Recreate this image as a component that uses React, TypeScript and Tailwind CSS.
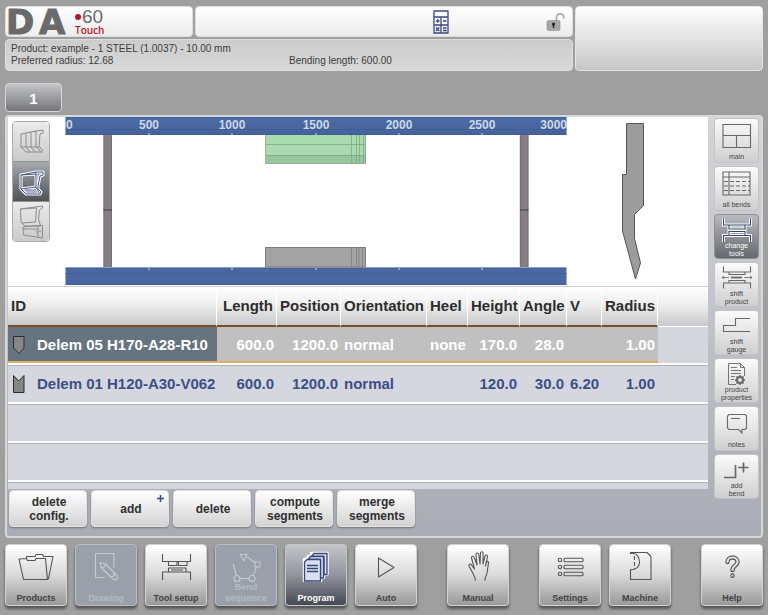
import type { ReactNode } from 'react'
import clsx from 'clsx'

const RULER = [
  { x: 149, label: '500' },
  { x: 232, label: '1000' },
  { x: 316, label: '1500' },
  { x: 399, label: '2000' },
  { x: 482, label: '2500' },
]

const COLUMNS = [
  { name: 'ID', width: 'w-[209px]', align: 'text-left' },
  { name: 'Length', width: 'w-[60px]', align: 'text-right' },
  { name: 'Position', width: 'w-[64px]', align: 'text-right' },
  { name: 'Orientation', width: 'w-[86px]', align: 'text-left' },
  { name: 'Heel', width: 'w-[41px]', align: 'text-left' },
  { name: 'Height', width: 'w-[52px]', align: 'text-right' },
  { name: 'Angle', width: 'w-[47px]', align: 'text-right' },
  { name: 'V', width: 'w-[35px]', align: 'text-left' },
  { name: 'Radius', width: 'w-[56px]', align: 'text-right' },
]

const TOOLS = [
  { kind: 'punch', cells: ['Delem 05 H170-A28-R10', '600.0', '1200.0', 'normal', 'none', '170.0', '28.0', '', '1.00'] },
  { kind: 'die', cells: ['Delem 01 H120-A30-V062', '600.0', '1200.0', 'normal', '', '120.0', '30.0', '6.20', '1.00'] },
]

function Logo() {
  return (
    <svg width="104" height="29" viewBox="0 0 104 29" role="img" aria-label="DA-60 Touch" className="overflow-visible">
      <g fill="#6a6a6a" stroke="#6a6a6a" fontFamily="'DejaVu Sans', sans-serif" fontWeight="700" fontSize="34">
        <text x="-2" y="27">D</text>
        <text x="31" y="27">A</text>
      </g>
      <circle cx="70" cy="10" r="3" fill="#b5182d" />
      <text x="74" y="16" fontFamily="Liberation Sans" fontSize="19" fill="#6a6a6a">60</text>
      <text x="67" y="27" fontFamily="Open Sans" fontSize="10" fontWeight="600" fill="#b5182d">Touch</text>
    </svg>
  )
}

function CalculatorIcon() {
  return (
    <svg width="16" height="24" viewBox="0 0 16 24" fill="none" stroke="#3b4a80" strokeWidth="1.3">
      <path d="M1 1h14v22H1zM1 7h14M1 15h14M8 7v16" />
      <path d="M3 11h3.500M4.700 9.300v3.500M10 11h3.500M3 17.500l3.300 3.500M6.300 17.500L3 21M10 18h3.500M10 20.500h3.500" />
    </svg>
  )
}

function UnlockedIcon() {
  return (
    <svg width="20" height="20" viewBox="0 0 20 20">
      <path d="M10.500 9V5.500a3.500 3.500 0 0 1 7.300 0v1" fill="none" stroke="#a8a8a8" strokeWidth="1.600" />
      <rect x="1" y="8.500" width="13" height="10" rx="1.500" fill="#a6a6a6" stroke="#8e8e8e" strokeWidth=".6" />
      <circle cx="7.500" cy="12" r="1.600" fill="#222" />
      <path d="M7.500 12v4" stroke="#222" strokeWidth="1.400" />
    </svg>
  )
}

// Front view of the press: ruler beams, side frames, installed segments and the tool profile
function MachineView() {
  return (
    <svg viewBox="57 117 651 169" className="h-[169px] min-w-0 flex-1 bg-white">
      <defs>
        <linearGradient id="beam" x1="0" y1="0" x2="0" y2="1">
          <stop offset="0" stopColor="#4d6ca3" />
          <stop offset="1" stopColor="#45629a" />
        </linearGradient>
      </defs>
      <rect x="65.500" y="117" width="501" height="18" fill="url(#beam)" />
      <path d="M65 117.500h502M65 129.500h502M65 134.500h502" stroke="#36568f" strokeOpacity=".4" />
      <rect x="65.500" y="267.500" width="501" height="17.500" fill="#4a689f" />
      <path d="M65 268h502M65 273.500h502M65 284.500h502" stroke="#36568f" strokeOpacity=".4" />
      <g fontFamily="Liberation Sans" fontSize="12" fontWeight="700" fill="#ccd8ea">
        <text x="66" y="129">0</text>
        {RULER.map((mark) => (
          <text key={mark.label} x={mark.x} y="129" textAnchor="middle">{mark.label}</text>
        ))}
        <text x="567" y="129" textAnchor="end">3000</text>
      </g>
      {RULER.map((mark) => (
        <path key={mark.x} d={`M${mark.x} 133v2M${mark.x} 268v2`} stroke="#ccd8ea" />
      ))}
      {[103.5, 519.9].map((x) => (
        <g key={x}>
          <rect x={x} y="135" width="8.500" height="132" fill="#857f86" />
          <path d={`M${x + 0.5} 135v132M${x + 8} 135v132`} stroke="#756f76" />
          <path d={`M${x} 210h8.500`} stroke="#57525a" strokeWidth="1.500" />
        </g>
      ))}
      <rect x="266" y="135" width="100" height="20" fill="#aadbb0" />
      <rect x="266" y="155" width="100" height="8.500" fill="#98c69d" />
      <path d="M266 144.500h100M266 155.500h100M265.500 135v28.500h100V135M351.500 135v28M356.500 135v28M359.500 135v28M363.500 135v28" fill="none" stroke="#7ba883" strokeWidth=".8" />
      <rect x="265.500" y="247.500" width="100" height="19.500" fill="#a3a3a3" stroke="#7d7d7d" />
      <path d="M351.500 248v19M356.500 248v19M359 248v19M362.500 248v19" stroke="#808080" strokeWidth=".8" />
      <path
        d="M626.500 123.500H643.500V205.500L634.500 214.500V238.500L640.500 263L635.500 279L622.500 231V174.500H626.500Z"
        fill="#9c9c9c"
        stroke="#555"
      />
    </svg>
  )
}

const VIEWS = [
  {
    name: 'segments view',
    icon: (
      <path d="M9 12l5-1 5-1 5-1 7-1v3l-3 1-1 12 4 5M9 12v13l5 5h17M9 25h18M14 11v14l4 5M19 10v15l4 5M24 9v15l5 6M16 11l2-1M21 10l2-1" />
    ),
  },
  {
    name: 'tool view',
    icon: <path d="M9 13l15-3h7v3l-3 1-2 10v3l3 3-1 2H14l-5-5zM9 13l15-1v13l-15 2M24 25l3 6M13 28h11M24 10v3" />,
  },
  {
    name: 'machine view',
    icon: <path d="M8.500 7l22-3v2l-3 2-1 10 1 2 1 4H13l-4-4zM8.500 7l16-1-1 14-14 1M11 25l16-1.500h3.500V36l-19-3zM26 24v11M11 27h15M24 30h2M28 28v2" />,
  },
]

const STEPS: { name: string; lines: string[]; icon: ReactNode }[] = [
  { name: 'main', lines: ['main'], icon: <path d="M9 5.500h27.500v23H9zM9 16.500h27.500M22.500 16.500v12" /> },
  {
    name: 'all bends',
    lines: ['all bends'],
    icon: (
      <>
        <path d="M9 5h27v23H9zM9 10h27M15 5v23" />
        <path d="M10 14.500h26M10 19h26M10 23.500h26" strokeDasharray="4 2" />
      </>
    ),
  },
  {
    name: 'change tools',
    lines: ['change', 'tools'],
    icon: <path d="M9.500 3.500v6.500h27V3.500M15 10.500v3.500h16v-3.500M15 20v-3.500h16V20M9.500 27v-6.500h27V27" />,
  },
  {
    name: 'shift product',
    lines: ['shift', 'product'],
    icon: (
      <>
        <path d="M9.500 3.500v5.500h27V3.500M15 9v2.500h16V9M15 20v-2.500h16V20M9.500 25.500V20h27v5.500" />
        <path d="M17 14.500h11" strokeWidth="1.800" />
        <path d="M8 14.500h7M10 13l-2 1.500 2 1.500M30 14.500h8M36 13l2 1.500-2 1.500" strokeWidth=".8" />
      </>
    ),
  },
  { name: 'shift gauge', lines: ['shift', 'gauge'], icon: <path d="M36 7.500H21.500v7H9.500v6H36" /> },
  {
    name: 'product properties',
    lines: ['product', 'properties'],
    icon: (
      <>
        <path d="M22 25.500h-7.500v-21h12l4 4V17M26.500 4.500v4h4M17 8.500h6M17 11.500h10M17 14.500h10M17 17.500h4M17 20.500h3" strokeWidth=".9" />
        <circle cx="26" cy="21" r="3" strokeWidth="2" />
        <path d="M26 16v2M26 24v2M21 21h2M29 21h2M22.500 17.500l1.500 1.500M28 23l1.500 1.500M22.500 24.500l1.500-1.500M28 19l1.500-1.500" strokeWidth="1.500" />
      </>
    ),
  },
  {
    name: 'notes',
    lines: ['notes'],
    icon: <path d="M15 7.500h16l1.500 1.500v12L31 22.500h-3v3.500l-3.500-3.500H15L13.500 21V9zM17 11.500h9" />,
  },
  {
    name: 'add bend',
    lines: ['add', 'bend'],
    icon: <path d="M10 22.500h11.500V10M24 12.500h10.500M29.500 7.500v10" strokeWidth="1.700" />,
  },
]

const ACTIONS = [['delete', 'config.'], ['add'], ['delete'], ['compute', 'segments'], ['merge', 'segments']]

type Mode = { name: string; state?: 'active' | 'disabled'; icon: ReactNode }

const MODES: Mode[][] = [
  [
    {
      name: 'Products',
      icon: (
        <path d="M3 9l7.500-.5 1 2h7.500l1-2h9.500L31.500 29.500H7.500zM10.500 8.500v-2h8.500l1-2h6.500l1 2H37l-4.500 22-1 1" />
      ),
    },
    {
      name: 'Drawing',
      state: 'disabled',
      icon: <path d="M19 27.500H9.500V3.500h18.500v14M28 26v-4M14 12.500l1.500 5.500L27 29l3 1 1.500-1.500-.5-3L19.500 14zM15.500 18c2 0 3.500-1.500 4-4M25.500 27.500l3.500-3.500" />,
    },
    {
      name: 'Tool setup',
      icon: <path d="M6.500 4v7.500h28V4M12.500 11.500v4H21v-4M22.500 11.500v4H31v-4M12.500 22v-4H30v4M6.500 30v-8h28v8M15 20h12" />,
    },
    {
      name: 'Bend sequence',
      state: 'disabled',
      icon: (
        <>
          <path d="M7 14l3.500 11.500M14 28.500h9M27 26l3.500-9M29 12.500L21 7M14 4.500l7-.5-3 7z" />
          <circle cx="11" cy="28.500" r="3" />
          <circle cx="26" cy="28.500" r="3" />
          <path d="M29 12h5v5h-5z" />
        </>
      ),
    },
    {
      name: 'Program',
      state: 'active',
      icon: (
        <>
          <g fill="#dfe6f4" stroke="#fff" strokeWidth="3.500">
            <path d="M15.500 3.500h15.500v20.500h-15.500zM12 6.500h15.500v21H12zM8.500 9.500h16v21.500h-16z" />
          </g>
          <g fill="#d9e1f0" stroke="#35467a" strokeWidth="1.300">
            <path d="M18 3.500h13v21h-3V6.500H15.500z" />
            <path d="M14.500 6.500H27.500v21.500h-3V9.500H12z" />
            <path d="M11 9.500h13.500V31H8.500V12z" />
            <path d="M11 15.500h11M11 18.500h11M11 21.500h11" />
          </g>
        </>
      ),
    },
    { name: 'Auto', icon: <path d="M12.500 8v19L28 17.500z" /> },
  ],
  [
    {
      name: 'Manual',
      icon: (
        <path d="M17.500 30.500c0-3-2-5.500-3-8l-3.500-6.500c-.5-2 1.500-2.500 2.500-1l3 4-3-11c-.3-2 2-2.500 2.600-.6L19 15 18 4.500c0-2 2.500-2 2.800 0L22 14l.5-11c.2-1.700 2.500-1.700 2.600 0L25 14l2-8c.5-1.600 2.500-1.200 2.500.5L27.500 16l1-3.500c.5-1.500 2.500-1.500 2 .5l-1.500 10c-.5 3-2.500 4.500-2 7.500" />
      ),
    },
  ],
  [
    {
      name: 'Settings',
      icon: (
        <>
          {[10, 17, 24].map((y) => (
            <g key={y}>
              <circle cx="10" cy={y} r="1.700" />
              <rect x="14" y={y - 1.7} width="19" height="3.400" rx="1" />
            </g>
          ))}
        </>
      ),
    },
    {
      name: 'Machine',
      icon: (
        <>
          <path d="M10.500 2.500H27l4 4v23H10.500V19.500c3 1 9-1.500 9-7.500 0-5-3-8.500-5.500-8.500h-3.500z" />
          <path d="M14.500 6v13" strokeDasharray="4 2" />
        </>
      ),
    },
  ],
  [
    {
      name: 'Help',
      icon: (
        <g strokeLinecap="round">
          <path d="M15.500 12c0-6 10-6 10 0 0 3.500-5 3.500-5 8M20.500 25.500v.2" strokeWidth="4.400" />
          <path d="M15.500 12c0-6 10-6 10 0 0 3.500-5 3.500-5 8M20.500 25.500v.2" stroke="#dedede" strokeWidth="2.200" />
        </g>
      ),
    },
  ],
]

function ToolIcon({ kind }: { kind: string }) {
  return (
    <svg width="12" height="18" viewBox="0 0 12 18" fill="#868686" stroke="#2c2c2c" className="shrink-0">
      <path d={kind === 'punch' ? 'M.5.5h10.500V12L6 17.500.500 12z' : 'M.500 17.500V.500L5.700 6 11 .500V17.500z'} />
    </svg>
  )
}

function ToolTable() {
  return (
    <table className="w-full table-fixed border-separate border-spacing-0 text-[15px] leading-[18px] font-bold">
      <thead>
        <tr className="h-[40px] text-[#2d2d2d]">
          {COLUMNS.map((col) => (
            <th
              key={col.name}
              scope="col"
              className={clsx(
                col.width,
                col.align,
                'border-r border-b-2 border-r-white border-b-[#7c4c22] bg-linear-to-b from-white via-[#ececec] to-[#c8c9cb] px-[3px]',
              )}
            >
              {col.name}
            </th>
          ))}
          <td className="border-b border-white bg-linear-to-b from-white via-[#ececec] to-[#c8c9cb]" />
        </tr>
      </thead>
      <tbody>
        {TOOLS.map((tool, row) => (
          <tr key={tool.kind} className={row === 0 ? 'h-[38px]' : 'h-[39px]'}>
            {tool.cells.map((cell, i) => (
              <td
                key={COLUMNS[i].name}
                className={clsx(
                  COLUMNS[i].align,
                  'border-b-2 border-white px-[3px] whitespace-nowrap',
                  row === 0 ? 'text-white shadow-[inset_0_-2px_0_#e0ae68]' : 'border-t border-t-[#adb2bb] bg-[#d5d7de] text-[#3b4f88]',
                  row === 0 && (i === 0 ? 'bg-[#66747f]' : 'bg-[#c0c0c0]'),
                )}
              >
                {i === 0 ? (
                  <span className="flex items-center gap-3 pl-[2px]">
                    <ToolIcon kind={tool.kind} />
                    {cell}
                  </span>
                ) : (
                  cell
                )}
              </td>
            ))}
            <td className={clsx('border-b-2 border-white bg-[#d4d7dd]', row === 1 && 'border-t border-t-[#adb2bb]')} />
          </tr>
        ))}
        {[0, 1].map((row) => (
          <tr key={row} className="h-[39px]">
            <td colSpan={10} className="border-t border-b-2 border-t-[#adb2bb] border-b-white bg-[#d5d7dd]" />
          </tr>
        ))}
        <tr className="h-[7px]">
          <td colSpan={10} className="border-t border-[#adb2bb] bg-[#d3d6dc] p-0" />
        </tr>
      </tbody>
    </table>
  )
}

function ModeButton({ mode }: { mode: Mode }) {
  const disabled = mode.state === 'disabled'
  const active = mode.state === 'active'
  return (
    <button
      type="button"
      disabled={disabled}
      className={clsx(
        'flex h-[62px] w-[62px] flex-col items-center justify-between rounded border pt-[5px] pb-px text-[9px] leading-[11px] font-bold shadow-[0_3px_3px_#555]',
        disabled && 'border-[#b9bdc6] bg-[#9aa0ab] text-[#b6bac4]',
        active && 'border-[#c6c8cd] bg-linear-to-b from-[#c3c5ca] via-[#92959d] to-[#454951] text-white',
        !disabled && !active && 'border-[#d2d2d2] bg-linear-to-b from-white via-[#dadada] to-[#999] text-[#424242]',
      )}
    >
      <svg
        width="40"
        height="32"
        viewBox="0 0 40 32"
        fill="none"
        stroke={disabled ? '#c5c9d1' : '#555'}
        strokeWidth="1.100"
        strokeLinejoin="round"
        className="shrink-0"
      >
        {mode.icon}
      </svg>
      <span>{mode.name}</span>
    </button>
  )
}

export default function App() {
  return (
    <div className="flex min-h-screen flex-col bg-[#9f9f9f] px-[5px] pt-[6px] pb-2 font-['Liberation_Sans',Arial,sans-serif]">
      <header className="flex h-[65px] gap-[2px] text-[10px] leading-[12px] text-[#3c3c3c]">
        <div className="flex flex-1 flex-col gap-[2px]">
          <div className="flex h-[31px] gap-[2px]">
            <div className="flex w-[188px] items-center rounded border border-[#dedede] bg-linear-to-b from-white to-[#ececec] pl-[2px]">
              <Logo />
            </div>
            <div className="flex flex-1 items-center justify-between rounded border border-[#dedede] bg-linear-to-b from-white to-[#ececec] pr-[6px]">
              <span className="w-5" />
              <button type="button" aria-label="Calculator" className="ml-[120px]">
                <CalculatorIcon />
              </button>
              <button type="button" aria-label="Unlocked">
                <UnlockedIcon />
              </button>
            </div>
          </div>
          <div className="flex flex-1 items-end rounded border border-[#dedede] bg-linear-to-b from-[#cccccc] to-[#d8d8d8] pb-[3px] pl-[5px]">
            <div className="w-[278px]">
              <p>Product: example - 1 STEEL (1.0037) - 10.00 mm</p>
              <p>Preferred radius: 12.68</p>
            </div>
            <p>Bending length: 600.00</p>
          </div>
        </div>
        <div className="w-[188px] rounded border border-[#e6e6e6] bg-linear-to-b from-white to-[#c6c6c6]" />
      </header>

      <button
        type="button"
        className="mt-3 h-[29px] w-[57px] rounded border border-[#d5d5d5] bg-linear-to-b from-[#c4c5c8] to-[#75777c] pt-[2px] text-[15px] leading-[18px] font-bold text-white"
      >
        1
      </button>

      <main className="mt-[3px] flex rounded border-2 border-[#d6d7db] bg-linear-to-b from-[#d4d5d8] via-[#bfc2c9] to-[#a9acb5]">
        <div className="min-w-0 flex-1 pl-px">
          <section className="flex border-b border-[#c9ccd3] bg-white pl-1">
            <div className="mt-[4px] mr-[7px] flex h-[121px] w-[38px] flex-col divide-y divide-[#8f8f8f] overflow-hidden rounded border border-[#ababab]">
              {VIEWS.map((view, i) => (
                <button
                  key={view.name}
                  type="button"
                  aria-label={view.name}
                  className={clsx(
                    'flex-1 bg-linear-to-b',
                    i === 1 ? 'from-[#a6aab0] to-[#505358]' : 'from-[#ebebeb] to-[#cacaca]',
                  )}
                >
                  <svg width="36" height="39" viewBox="1 0 36 39" fill="none" strokeWidth="1" strokeLinejoin="round">
                    {i === 1 && <g stroke="#fff" strokeWidth="3">{view.icon}</g>}
                    <g stroke={i === 1 ? '#45548a' : '#8d8d8d'}>{view.icon}</g>
                  </svg>
                </button>
              ))}
            </div>
            <MachineView />
          </section>
          <ToolTable />
          <div className="flex gap-1 px-px pt-px pb-[9px]">
            {ACTIONS.map((lines, i) => (
              <button
                key={i}
                type="button"
                className="relative h-[37px] w-[78px] rounded border border-[#e2e2e2] bg-linear-to-b from-white to-[#d3d3d3] pl-[2px] text-[12px] leading-[14px] font-bold text-[#303030] shadow-[0_1px_2px_#777]"
              >
                {lines.map((line) => (
                  <span key={line} className="block">{line}</span>
                ))}
                {lines[0] === 'add' && (
                  <svg className="absolute top-[4px] right-[4px]" width="7" height="7" viewBox="0 0 7 7">
                    <path d="M3.500 0v7M0 3.500h7" stroke="#3a4c88" strokeWidth="1.600" />
                  </svg>
                )}
              </button>
            ))}
          </div>
        </div>

        <aside className="flex w-[53px] flex-col items-start gap-[3px] pt-px pl-[6px]">
          {STEPS.map((step) => {
            const active = step.name === 'change tools'
            return (
              <button
                key={step.name}
                type="button"
                className={clsx(
                  'flex h-[45px] w-[45px] flex-col items-center justify-between rounded border bg-linear-to-b pb-px text-[7px] leading-[8px]',
                  active
                    ? 'border-[#8d9095] from-[#b9bbbf] to-[#65686d] text-white'
                    : 'border-[#c4c4c6] from-[#fbfbfb] to-[#cfcfcf] text-[#444]',
                )}
              >
                <svg width="45" height="27" viewBox="0 0 45 27" fill="none" strokeWidth="1.100" className="shrink-0 overflow-visible">
                  {active && <g stroke="#fff" strokeWidth="3">{step.icon}</g>}
                  <g stroke={active ? '#34466f' : '#686868'}>{step.icon}</g>
                </svg>
                <span className="relative">
                  {step.lines.map((line) => (
                    <span key={line} className="block">{line}</span>
                  ))}
                </span>
              </button>
            )
          })}
        </aside>
      </main>

      <nav className="mt-[6px] flex justify-between">
        {MODES.map((group) => (
          <div key={group[0].name} className="flex gap-2">
            {group.map((mode) => (
              <ModeButton key={mode.name} mode={mode} />
            ))}
          </div>
        ))}
      </nav>
    </div>
  )
}
